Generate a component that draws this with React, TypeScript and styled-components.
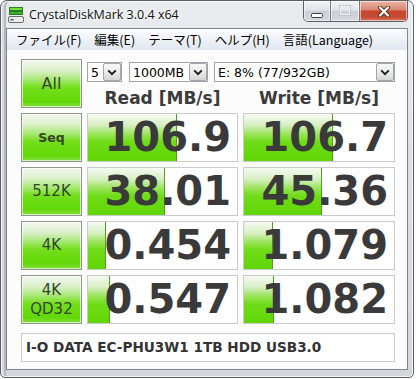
import React from "react";
import styled, { createGlobalStyle } from "styled-components";

const GlobalStyle = createGlobalStyle`
  html, body { margin: 0; padding: 0; background: #ffffff; }
  body { font-family: "DejaVu Sans", sans-serif; }
`;

const Window = styled.div`
  box-sizing: border-box;
  width: 414px;
  height: 378px;
  border: 1px solid #5b5f64;
  border-radius: 7px 7px 5px 5px;
  background: linear-gradient(180deg, #e9ecef 0%, #dce0e4 40%, #d3d7dc 100%);
  box-shadow: inset 0 0 0 1px rgba(255, 255, 255, 0.75), inset 3px 0 0 0 #d6d9dd, inset 5px 0 0 0 #b4b8bd;
  display: flex;
  flex-direction: column;
  overflow: hidden;
`;

const TitleBar = styled.div`
  height: 27px;
  flex-shrink: 0;
  display: flex;
  align-items: flex-start;
  padding: 0 5px 0 7px;
`;

const TitleIcon = styled.svg`
  margin-top: 6px;
  width: 16px;
  height: 16px;
  flex-shrink: 0;
`;

const TitleText = styled.div`
  margin-left: 5px;
  font-family: "Open Sans", "Noto Sans", sans-serif;
  font-size: 12.5px;
  line-height: 27px;
  color: #111;
  text-shadow: 0 0 6px #fff, 0 0 3px #fff;
`;

const CaptionGroup = styled.div`
  margin-left: auto;
  display: flex;
  height: 20px;
  border: 1px solid #5d6167;
  border-top: none;
  border-radius: 0 0 5px 5px;
  overflow: hidden;
`;

const CaptionButton = styled.div<{ $kind: "min" | "max" | "close" }>`
  width: ${(p) => (p.$kind === "close" ? 47 : p.$kind === "max" ? 28 : 26)}px;
  display: flex;
  align-items: center;
  justify-content: center;
  border-left: ${(p) => (p.$kind === "min" ? "none" : "1px solid #737a82")};
  background: ${(p) =>
    p.$kind === "close"
      ? "linear-gradient(180deg, #eab3a5 0%, #dc8a76 42%, #c8462e 52%, #c64a33 80%, #d9785d 100%)"
      : "linear-gradient(180deg, #f1f3f5 0%, #e1e4e8 45%, #cbd0d6 52%, #d4d8dd 100%)"};
  box-shadow: inset 0 0 0 1px rgba(255, 255, 255, 0.55);
`;

const Client = styled.div`
  flex: 1;
  margin: 0 5px 7px 5px;
  border: 1px solid #7f858c;
  background: #fcfcfc;
  display: flex;
  flex-direction: column;
`;

const MenuBar = styled.div`
  height: 21px;
  flex-shrink: 0;
  display: flex;
  align-items: center;
  gap: 13px;
  padding-left: 9px;
  background: linear-gradient(180deg, #fbfcfe 0%, #eef1f7 50%, #e1e7f0 100%);
  font-family: "Noto Sans CJK JP", "Noto Sans", sans-serif;
  font-size: 12.5px;
  line-height: 21px;
  color: #000;
`;

const MenuItem = styled.span`
  white-space: nowrap;
`;

const Content = styled.div`
  flex: 1;
  padding: 9px 12px 7px 14px;
  display: grid;
  grid-template-columns: 61px 151px 152px;
  grid-template-rows: repeat(5, 49px) 33px;
  gap: 5px;
`;

const LabelButton = styled.div<{ $bold?: boolean; $size: number }>`
  box-sizing: border-box;
  border: 1px solid #8e968b;
  box-shadow: inset 0 0 0 1px rgba(255, 255, 255, 0.65);
  background: linear-gradient(
    180deg,
    #f3f7f0 0%,
    #dcf0cc 22%,
    #a6e872 42%,
    #74df1c 58%,
    #62d806 88%,
    #86de40 100%
  );
  display: flex;
  flex-direction: column;
  align-items: center;
  justify-content: center;
  font-family: "DejaVu Sans", sans-serif;
  font-size: ${(p) => p.$size}px;
  font-weight: ${(p) => (p.$bold ? 700 : 400)};
  line-height: 19px;
  color: #34432a;
`;

const TopPanel = styled.div`
  grid-column: 2 / 4;
  display: flex;
  flex-direction: column;
`;

const SelectRow = styled.div`
  display: flex;
  margin-top: 3px;
  height: 20px;
`;

const Select = styled.div<{ $width: number; $gap: number }>`
  box-sizing: border-box;
  width: ${(p) => p.$width}px;
  margin-left: ${(p) => p.$gap}px;
  height: 20px;
  border: 1px solid #9ea4ab;
  background: #fff;
  display: flex;
  align-items: center;
  padding-left: 3px;
  font-family: "DejaVu Sans", sans-serif;
  font-size: 12.5px;
  color: #000;
  white-space: nowrap;
`;

const DropButton = styled.div`
  box-sizing: border-box;
  margin-left: auto;
  width: 18px;
  height: 18px;
  border: 1px solid #a1a6ad;
  border-radius: 2px;
  background: linear-gradient(180deg, #f7f7f7 0%, #ebebeb 50%, #d6d6d6 100%);
  display: flex;
  align-items: center;
  justify-content: center;
`;

const HeaderRow = styled.div`
  display: grid;
  grid-template-columns: 151px 152px;
  column-gap: 5px;
  margin-top: 7px;
  font-family: "DejaVu Sans", sans-serif;
  font-weight: 700;
  font-size: 17px;
  line-height: 19px;
  color: #3b3b3b;
  text-align: center;
  white-space: nowrap;
`;

const Cell = styled.div`
  position: relative;
  box-sizing: border-box;
  border: 1px solid #cacaca;
  background: #fff;
  overflow: hidden;
  text-align: right;
  padding-right: 6px;
  font-family: "DejaVu Sans", sans-serif;
  font-weight: 700;
  font-size: 40px;
  line-height: 47px;
  color: #3a3a3a;
`;

const Bar = styled.div`
  position: absolute;
  left: 0;
  top: 0;
  bottom: 0;
  box-sizing: border-box;
  border-right: 1px solid #4f9f24;
  background: linear-gradient(
    180deg,
    #f6faf3 0%,
    #d6efc2 24%,
    #97e355 44%,
    #6edc16 60%,
    #60d604 100%
  );
`;

const Value = styled.span`
  position: relative;
`;

const Comment = styled.div`
  grid-column: 1 / -1;
  align-self: end;
  box-sizing: border-box;
  height: 29px;
  border: 1px solid #cacaca;
  background: #fff;
  padding-left: 4px;
  font-family: "DejaVu Sans", sans-serif;
  font-weight: 700;
  font-size: 13.6px;
  line-height: 27px;
  color: #333;
  white-space: nowrap;
`;

const Chevron = () => (
  <svg width="10" height="7" viewBox="0 0 10 7">
    <path d="M1.2 1.3 L5 5.2 L8.8 1.3" fill="none" stroke="#1b1b1b" strokeWidth="1.9" />
  </svg>
);

const rows = [
  { label: ["Seq"], bold: true, size: 12.5, read: "106.9", readBar: 89, write: "106.7", writeBar: 89 },
  { label: ["512K"], size: 15, read: "38.01", readBar: 77, write: "45.36", writeBar: 78 },
  { label: ["4K"], size: 15, read: "0.454", readBar: 18, write: "1.079", writeBar: 29 },
  { label: ["4K", "QD32"], size: 15, read: "0.547", readBar: 22, write: "1.082", writeBar: 30 },
];

const menu = ["ファイル(F)", "編集(E)", "テーマ(T)", "ヘルプ(H)", "言語(Language)"];

export default function App() {
  return (
    <>
      <GlobalStyle />
      <Window>
        <TitleBar>
          <TitleIcon viewBox="0 0 16 16">
            <rect x="1.5" y="0.5" width="13" height="3" fill="#6ee23a" stroke="#2c7d22" />
            <rect x="1.5" y="4.5" width="13" height="3" fill="#3fae2c" stroke="#2c7d22" />
            <rect x="0.5" y="9.5" width="15" height="6" rx="1.5" fill="#ececec" stroke="#6e6e6e" />
            <rect x="2.5" y="12" width="3" height="1.5" fill="#555" />
          </TitleIcon>
          <TitleText>CrystalDiskMark 3.0.4 x64</TitleText>
          <CaptionGroup>
            <CaptionButton $kind="min">
              <svg width="12" height="16" viewBox="0 0 12 16">
                <rect x="0.5" y="10.5" width="11" height="4" rx="1" fill="#fff" stroke="#3a3f45" />
              </svg>
            </CaptionButton>
            <CaptionButton $kind="max">
              <svg width="12" height="12" viewBox="0 0 12 12">
                <rect x="1" y="1" width="10" height="9" fill="none" stroke="#f4f5f7" strokeWidth="1.6" />
                <rect x="0.3" y="0.3" width="11.4" height="10.4" fill="none" stroke="#a4aab2" strokeWidth="0.6" />
              </svg>
            </CaptionButton>
            <CaptionButton $kind="close">
              <svg width="12" height="11" viewBox="0 0 12 11">
                <path d="M2 1.5 L10 9.5 M10 1.5 L2 9.5" stroke="#5a2318" strokeWidth="4" strokeLinecap="round" />
                <path d="M2 1.5 L10 9.5 M10 1.5 L2 9.5" stroke="#ffffff" strokeWidth="2.3" strokeLinecap="round" />
              </svg>
            </CaptionButton>
          </CaptionGroup>
        </TitleBar>
        <Client>
          <MenuBar>
            {menu.map((m) => (
              <MenuItem key={m}>{m}</MenuItem>
            ))}
          </MenuBar>
          <Content>
            <LabelButton $size={16}>All</LabelButton>
            <TopPanel>
              <SelectRow>
                <Select $width={35} $gap={0}>
                  5
                  <DropButton>
                    <Chevron />
                  </DropButton>
                </Select>
                <Select $width={79} $gap={7}>
                  1000MB
                  <DropButton>
                    <Chevron />
                  </DropButton>
                </Select>
                <Select $width={181} $gap={6}>
                  E: 8% (77/932GB)
                  <DropButton>
                    <Chevron />
                  </DropButton>
                </Select>
              </SelectRow>
              <HeaderRow>
                <span>Read [MB/s]</span>
                <span>Write [MB/s]</span>
              </HeaderRow>
            </TopPanel>
            {rows.map((r) => (
              <React.Fragment key={r.label.join(" ")}>
                <LabelButton $bold={r.bold} $size={r.size}>
                  {r.label.map((l) => (
                    <span key={l}>{l}</span>
                  ))}
                </LabelButton>
                <Cell>
                  <Bar style={{ width: r.readBar }} />
                  <Value>{r.read}</Value>
                </Cell>
                <Cell>
                  <Bar style={{ width: r.writeBar }} />
                  <Value>{r.write}</Value>
                </Cell>
              </React.Fragment>
            ))}
            <Comment>I-O DATA EC-PHU3W1 1TB HDD USB3.0</Comment>
          </Content>
        </Client>
      </Window>
    </>
  );
}
